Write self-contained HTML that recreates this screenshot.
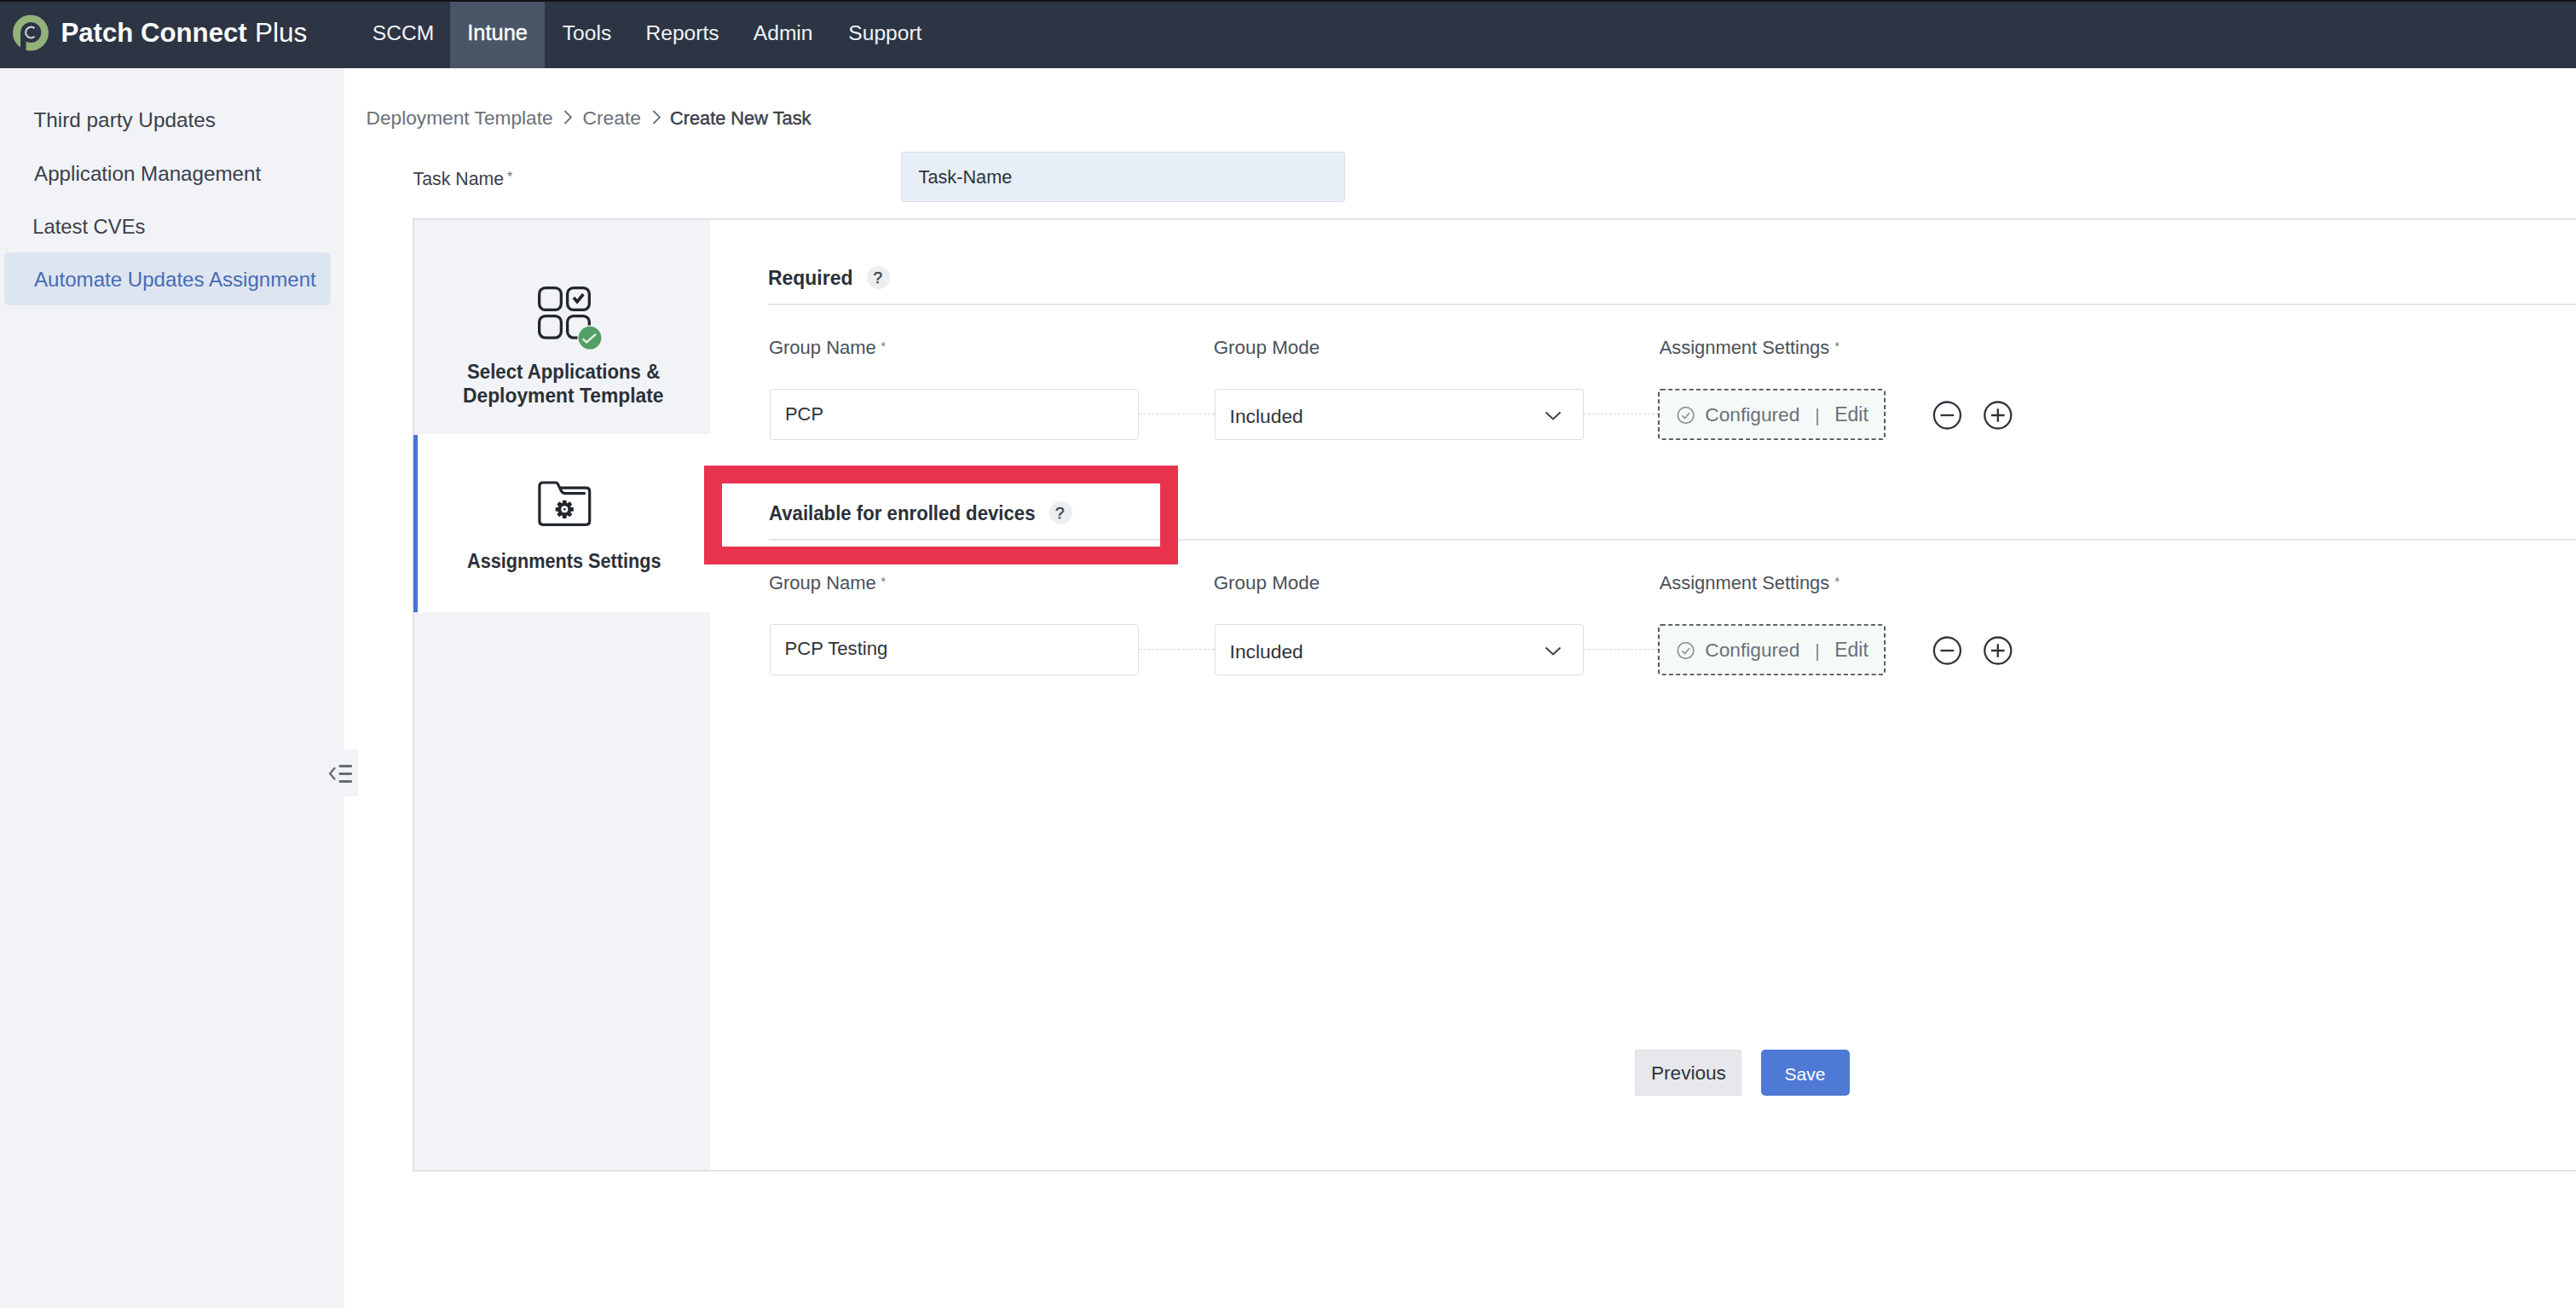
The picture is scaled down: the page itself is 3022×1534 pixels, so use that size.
<!DOCTYPE html>
<html><head><meta charset="utf-8"><style>
*{box-sizing:border-box;margin:0;padding:0}
html,body{width:3022px;height:1534px;overflow:hidden;background:#fff;font-family:"Liberation Sans", sans-serif}
.t{position:absolute;white-space:pre}
.abs{position:absolute}
</style></head><body>
<div class="abs" style="left:0;top:0;width:3022px;height:80px;background:#2d3444"></div>
<div class="abs" style="left:0;top:0;width:3022px;height:2px;background:#0f1115"></div>
<div class="abs" style="left:528px;top:2px;width:111px;height:78px;background:#4a5567"></div>
<svg class="abs" style="left:0;top:0" width="70" height="80" viewBox="0 0 70 80">
<circle cx="36" cy="38.5" r="21" fill="#93b27b"/>
<circle cx="36.3" cy="38" r="12" fill="#2d3444"/>
<rect x="24" y="38" width="6.6" height="22" fill="#2d3444"/>
<path d="M40.5 33.2 A6.3 6.3 0 1 0 40.5 42.8" fill="none" stroke="#c9ccd2" stroke-width="2.2"/>
</svg>
<div class="t" style="left:71.4px;top:23.1px;font-size:31.2px;line-height:31.2px;color:#ffffff;font-weight:700;">Patch Connect</div>
<div class="t" style="left:299.1px;top:22.8px;font-size:31.5px;line-height:31.5px;color:#ffffff;font-weight:400;">Plus</div>
<div class="t" style="left:436.8px;top:26.7px;font-size:24.6px;line-height:24.6px;color:#f2f4f7;font-weight:400;">SCCM</div>
<div class="t" style="left:659.8px;top:26.7px;font-size:24.6px;line-height:24.6px;color:#f2f4f7;font-weight:400;">Tools</div>
<div class="t" style="left:757.5px;top:26.7px;font-size:24.6px;line-height:24.6px;color:#f2f4f7;font-weight:400;">Reports</div>
<div class="t" style="left:883.8px;top:26.7px;font-size:24.6px;line-height:24.6px;color:#f2f4f7;font-weight:400;">Admin</div>
<div class="t" style="left:995.3px;top:26.7px;font-size:24.6px;line-height:24.6px;color:#f2f4f7;font-weight:400;">Support</div>
<div class="t" style="left:548.3px;top:26.0px;font-size:25.4px;line-height:25.4px;color:#ffffff;font-weight:400;-webkit-text-stroke:0.4px #ffffff">Intune</div>
<div class="abs" style="left:0;top:80px;width:404px;height:1454px;background:#f1f3f7"></div>
<div class="abs" style="left:5px;top:296px;width:383px;height:62px;background:#dde5f0;border-radius:5px"></div>
<div class="t" style="left:39.5px;top:129.0px;font-size:24.3px;line-height:24.3px;color:#3b4049;font-weight:400;">Third party Updates</div>
<div class="t" style="left:40.0px;top:191.9px;font-size:24.2px;line-height:24.2px;color:#3b4049;font-weight:400;">Application Management</div>
<div class="t" style="left:38.2px;top:253.9px;font-size:23.8px;line-height:23.8px;color:#3b4049;font-weight:400;">Latest CVEs</div>
<div class="t" style="left:40.0px;top:316.1px;font-size:24.1px;line-height:24.1px;color:#476bb5;font-weight:400;">Automate Updates Assignment</div>
<div class="abs" style="left:404px;top:879px;width:16px;height:55px;background:#f1f3f7"></div>
<svg class="abs" style="left:380px;top:890px" width="40" height="35" viewBox="0 0 40 35">
<path d="M13 10.3 L7.2 17.3 L13 24.3" fill="none" stroke="#676c74" stroke-width="2.4"/>
<rect x="17.8" y="7" width="15" height="3" fill="#676c74"/>
<rect x="17.8" y="16" width="15" height="3" fill="#676c74"/>
<rect x="17.8" y="25" width="15" height="3" fill="#676c74"/>
</svg>
<div class="t" style="left:429.6px;top:126.8px;font-size:22.7px;line-height:22.7px;color:#6b7079;font-weight:400;">Deployment Template</div>
<div class="t" style="left:683.5px;top:126.7px;font-size:22.8px;line-height:22.8px;color:#6b7079;font-weight:400;">Create</div>
<div class="t" style="left:785.9px;top:128.3px;font-size:21.8px;line-height:21.8px;color:#3b4049;font-weight:400;-webkit-text-stroke:0.45px #3b4049">Create New Task</div>
<svg class="abs" style="left:661px;top:128px" width="12" height="20" viewBox="0 0 12 20"><path d="M1.5 2 L9 9.5 L1.5 17" fill="none" stroke="#6b7079" stroke-width="1.8"/></svg>
<svg class="abs" style="left:764.5px;top:128px" width="12" height="20" viewBox="0 0 12 20"><path d="M1.5 2 L9 9.5 L1.5 17" fill="none" stroke="#6b7079" stroke-width="1.8"/></svg>
<div class="t" style="left:484.6px;top:199.6px;font-size:21.3px;line-height:21.3px;color:#3b4049;font-weight:400;">Task Name</div>
<div class="t" style="left:595.0px;top:204.1px;font-size:16px;line-height:16px;color:#6b7079;font-weight:400;transform:translateY(-4px)">*</div>
<div class="abs" style="left:1057px;top:178px;width:521px;height:59px;background:#e8eef8;border:1.5px solid #d9dde4;border-radius:3px"></div>
<div class="t" style="left:1077.6px;top:197.0px;font-size:21.7px;line-height:21.7px;color:#2f343c;font-weight:400;">Task-Name</div>
<div class="abs" style="left:484px;top:256px;width:2600px;height:1118px;border:2px solid #dfe2e7;background:#fff"></div>
<div class="abs" style="left:486px;top:258px;width:347px;height:1114px;background:#f1f3f7"></div>
<div class="abs" style="left:486px;top:509px;width:347px;height:209px;background:#ffffff"></div>
<div class="abs" style="left:485px;top:510px;width:5px;height:208px;background:#4a74d4"></div>
<svg class="abs" style="left:626px;top:330px" width="90" height="90" viewBox="0 0 90 90">
<g fill="none" stroke="#22262d" stroke-width="3.3">
<rect x="6.65" y="7.65" width="25.7" height="25.7" rx="7"/>
<rect x="39.65" y="7.65" width="25.7" height="25.7" rx="7"/>
<rect x="6.65" y="40.65" width="25.7" height="25.4" rx="7"/>
<rect x="39.65" y="40.65" width="25.7" height="25.4" rx="7"/>
<path d="M47 19 L51.1 23.9 L58.3 15" stroke-width="3.6"/>
</g>
<circle cx="66" cy="66.2" r="14.6" fill="#f1f3f7"/>
<circle cx="66" cy="66.2" r="13.4" fill="#53a066"/>
<path d="M57.7 67.3 L62.1 71.4 L73.1 61.8" fill="none" stroke="#e9f1e6" stroke-width="2.3"/>
</svg>
<div class="t" style="left:548.4px;top:423.5px;font-size:24px;line-height:24px;color:#2b3038;font-weight:700;transform:scaleX(0.925);transform-origin:0 0;">Select Applications &amp;</div>
<div class="t" style="left:543.4px;top:452.4px;font-size:24px;line-height:24px;color:#2b3038;font-weight:700;transform:scaleX(0.951);transform-origin:0 0;">Deployment Template</div>
<svg class="abs" style="left:626px;top:560px" width="72" height="64" viewBox="0 0 72 64">
<g fill="none" stroke="#22262d" stroke-width="3.2" stroke-linejoin="round" stroke-linecap="round">
<path d="M30.5 12.1 H61.7 Q65.7 12.1 65.7 16.1 V51.3 Q65.7 55.3 61.7 55.3 H10.9 Q6.9 55.3 6.9 51.3 V10 Q6.9 6 10.9 6 H26 Q27.6 6 28.4 7.6 L32.6 16 Q34 18.6 37 18.6 H59.5"/>
</g>
<g transform="translate(36.3,37.3)">
<polygon points="-2.15,-10.58 2.15,-10.58 2.61,-6.93 3.05,-6.74 5.97,-9.00 9.00,-5.97 6.74,-3.05 6.93,-2.61 10.58,-2.15 10.58,2.15 6.93,2.61 6.74,3.05 9.00,5.97 5.97,9.00 3.05,6.74 2.61,6.93 2.15,10.58 -2.15,10.58 -2.61,6.93 -3.05,6.74 -5.97,9.00 -9.00,5.97 -6.74,3.05 -6.93,2.61 -10.58,2.15 -10.58,-2.15 -6.93,-2.61 -6.74,-3.05 -9.00,-5.97 -5.97,-9.00 -3.05,-6.74 -2.61,-6.93" fill="#22262d"/>
<circle r="7.6" fill="#22262d"/>
<circle r="4" fill="#fff"/>
<circle r="1.3" fill="#22262d"/>
</g>
</svg>
<div class="t" style="left:547.7px;top:646.6px;font-size:23.5px;line-height:23.5px;color:#2b3038;font-weight:700;transform:scaleX(0.922);transform-origin:0 0;">Assignments Settings</div>
<div class="t" style="left:901.4px;top:313.7px;font-size:24px;line-height:24px;color:#2b3038;font-weight:700;transform:scaleX(0.956);transform-origin:0 0;">Required</div>
<div class="abs" style="left:1017.3px;top:311.8px;width:27px;height:27px;border-radius:50%;background:#eceef1"></div>
<div class="t" style="left:1024.5px;top:316.2px;font-size:19px;line-height:19px;color:#3d424a;font-weight:400;-webkit-text-stroke:0.5px #3d424a">?</div>
<div class="abs" style="left:902px;top:356px;width:2200px;height:2px;background:#e1e4e8"></div>
<div class="t" style="left:901.9px;top:396.9px;font-size:22.0px;line-height:22.0px;color:#4b515a;font-weight:400;">Group Name</div>
<div class="t" style="left:1033.5px;top:403.6px;font-size:14px;line-height:14px;color:#6b7079;font-weight:400;transform:translateY(-5px)">*</div>
<div class="t" style="left:1423.7px;top:396.5px;font-size:22.4px;line-height:22.4px;color:#4b515a;font-weight:400;">Group Mode</div>
<div class="t" style="left:1946.7px;top:397.0px;font-size:21.9px;line-height:21.9px;color:#4b515a;font-weight:400;">Assignment Settings</div>
<div class="t" style="left:2152.5px;top:403.6px;font-size:14px;line-height:14px;color:#6b7079;font-weight:400;transform:translateY(-5px)">*</div>
<div class="abs" style="left:903px;top:456px;width:433px;height:60px;border:1.5px solid #dadee4;border-radius:3px;background:#fff"></div>
<div class="abs" style="left:1425px;top:456px;width:433px;height:60px;border:1.5px solid #dadee4;border-radius:3px;background:#fff"></div>
<svg class="abs" style="left:1808px;top:477px" width="28" height="20" viewBox="0 0 28 20"><path d="M5.5 6.5 L14 14.5 L22.5 6.5" fill="none" stroke="#3b4049" stroke-width="2"/></svg>
<div class="abs" style="left:1336px;top:485px;width:89px;height:0;border-top:1.5px dashed #d3d7dd"></div>
<div class="abs" style="left:1858px;top:485px;width:88px;height:0;border-top:1.5px dashed #d3d7dd"></div>
<svg class="abs" style="left:1944px;top:454.5px" width="269" height="62" viewBox="0 0 269 62"><rect x="1.9" y="1.9" width="265.2" height="58.2" rx="3" fill="#f5faf7" stroke="#4d5259" stroke-width="1.9" stroke-dasharray="5 3.2"/></svg>
<svg class="abs" style="left:1965px;top:475px" width="26" height="26" viewBox="0 0 26 26"><circle cx="12.6" cy="12" r="9.3" fill="none" stroke="#8d929a" stroke-width="1.7"/><path d="M8.3 12.3 L11.6 15.5 L17 9.2" fill="none" stroke="#8d929a" stroke-width="1.7"/></svg>
<div class="abs" style="left:2131px;top:479px;width:2px;height:20px;background:#8d929a"></div>
<svg class="abs" style="left:2260px;top:463px" width="110" height="48" viewBox="0 0 110 48"><g fill="none" stroke="#30343b" stroke-width="2.3"><circle cx="24.4" cy="24" r="15.5"/><path d="M16.5 24 H32.3"/><circle cx="83.8" cy="24" r="15.5"/><path d="M76 24 H91.6 M83.8 16.2 V31.8"/></g></svg>
<div class="t" style="left:921.0px;top:475.3px;font-size:21.9px;line-height:21.9px;color:#2f343c;font-weight:400;">PCP</div>
<div class="t" style="left:1442.6px;top:477.2px;font-size:22.8px;line-height:22.8px;color:#2f343c;font-weight:400;">Included</div>
<div class="t" style="left:2000.3px;top:475.4px;font-size:22.7px;line-height:22.7px;color:#6b7079;font-weight:400;">Configured</div>
<div class="t" style="left:2152.2px;top:475.1px;font-size:23.0px;line-height:23.0px;color:#6b7079;font-weight:400;">Edit</div>
<div class="t" style="left:902.4px;top:589.7px;font-size:24px;line-height:24px;color:#2b3038;font-weight:700;transform:scaleX(0.925);transform-origin:0 0;">Available for enrolled devices</div>
<div class="abs" style="left:1230.9px;top:587.8px;width:27px;height:27px;border-radius:50%;background:#eceef1"></div>
<div class="t" style="left:1238.1px;top:592.2px;font-size:19px;line-height:19px;color:#3d424a;font-weight:400;-webkit-text-stroke:0.5px #3d424a">?</div>
<div class="abs" style="left:902px;top:632px;width:2200px;height:2px;background:#e1e4e8"></div>
<div class="t" style="left:901.9px;top:672.9px;font-size:22.0px;line-height:22.0px;color:#4b515a;font-weight:400;">Group Name</div>
<div class="t" style="left:1033.5px;top:679.6px;font-size:14px;line-height:14px;color:#6b7079;font-weight:400;transform:translateY(-5px)">*</div>
<div class="t" style="left:1423.7px;top:672.5px;font-size:22.4px;line-height:22.4px;color:#4b515a;font-weight:400;">Group Mode</div>
<div class="t" style="left:1946.7px;top:673.0px;font-size:21.9px;line-height:21.9px;color:#4b515a;font-weight:400;">Assignment Settings</div>
<div class="t" style="left:2152.5px;top:679.6px;font-size:14px;line-height:14px;color:#6b7079;font-weight:400;transform:translateY(-5px)">*</div>
<div class="abs" style="left:903px;top:732px;width:433px;height:60px;border:1.5px solid #dadee4;border-radius:3px;background:#fff"></div>
<div class="abs" style="left:1425px;top:732px;width:433px;height:60px;border:1.5px solid #dadee4;border-radius:3px;background:#fff"></div>
<svg class="abs" style="left:1808px;top:753px" width="28" height="20" viewBox="0 0 28 20"><path d="M5.5 6.5 L14 14.5 L22.5 6.5" fill="none" stroke="#3b4049" stroke-width="2"/></svg>
<div class="abs" style="left:1336px;top:761px;width:89px;height:0;border-top:1.5px dashed #d3d7dd"></div>
<div class="abs" style="left:1858px;top:761px;width:88px;height:0;border-top:1.5px dashed #d3d7dd"></div>
<svg class="abs" style="left:1944px;top:730.5px" width="269" height="62" viewBox="0 0 269 62"><rect x="1.9" y="1.9" width="265.2" height="58.2" rx="3" fill="#f5faf7" stroke="#4d5259" stroke-width="1.9" stroke-dasharray="5 3.2"/></svg>
<svg class="abs" style="left:1965px;top:751px" width="26" height="26" viewBox="0 0 26 26"><circle cx="12.6" cy="12" r="9.3" fill="none" stroke="#8d929a" stroke-width="1.7"/><path d="M8.3 12.3 L11.6 15.5 L17 9.2" fill="none" stroke="#8d929a" stroke-width="1.7"/></svg>
<div class="abs" style="left:2131px;top:755px;width:2px;height:20px;background:#8d929a"></div>
<svg class="abs" style="left:2260px;top:739px" width="110" height="48" viewBox="0 0 110 48"><g fill="none" stroke="#30343b" stroke-width="2.3"><circle cx="24.4" cy="24" r="15.5"/><path d="M16.5 24 H32.3"/><circle cx="83.8" cy="24" r="15.5"/><path d="M76 24 H91.6 M83.8 16.2 V31.8"/></g></svg>
<div class="t" style="left:920.5px;top:750.1px;font-size:22.1px;line-height:22.1px;color:#2f343c;font-weight:400;">PCP Testing</div>
<div class="t" style="left:1442.6px;top:753.2px;font-size:22.8px;line-height:22.8px;color:#2f343c;font-weight:400;">Included</div>
<div class="t" style="left:2000.3px;top:751.4px;font-size:22.7px;line-height:22.7px;color:#6b7079;font-weight:400;">Configured</div>
<div class="t" style="left:2152.2px;top:751.1px;font-size:23.0px;line-height:23.0px;color:#6b7079;font-weight:400;">Edit</div>
<div class="abs" style="left:826px;top:546px;width:556px;height:116px;border:21px solid #e8334f"></div>
<div class="abs" style="left:1918px;top:1231px;width:125px;height:54px;background:#e7e8eb;border:1px solid #dcdee2;border-radius:2px"></div>
<div class="t" style="left:1937.0px;top:1247.9px;font-size:22.6px;line-height:22.6px;color:#2f343c;font-weight:400;">Previous</div>
<div class="abs" style="left:2066px;top:1231px;width:104px;height:54px;background:#4e79d4;border-radius:5px"></div>
<div class="t" style="left:2093.6px;top:1249.2px;font-size:21.0px;line-height:21.0px;color:#ffffff;font-weight:400;">Save</div>
</body></html>
